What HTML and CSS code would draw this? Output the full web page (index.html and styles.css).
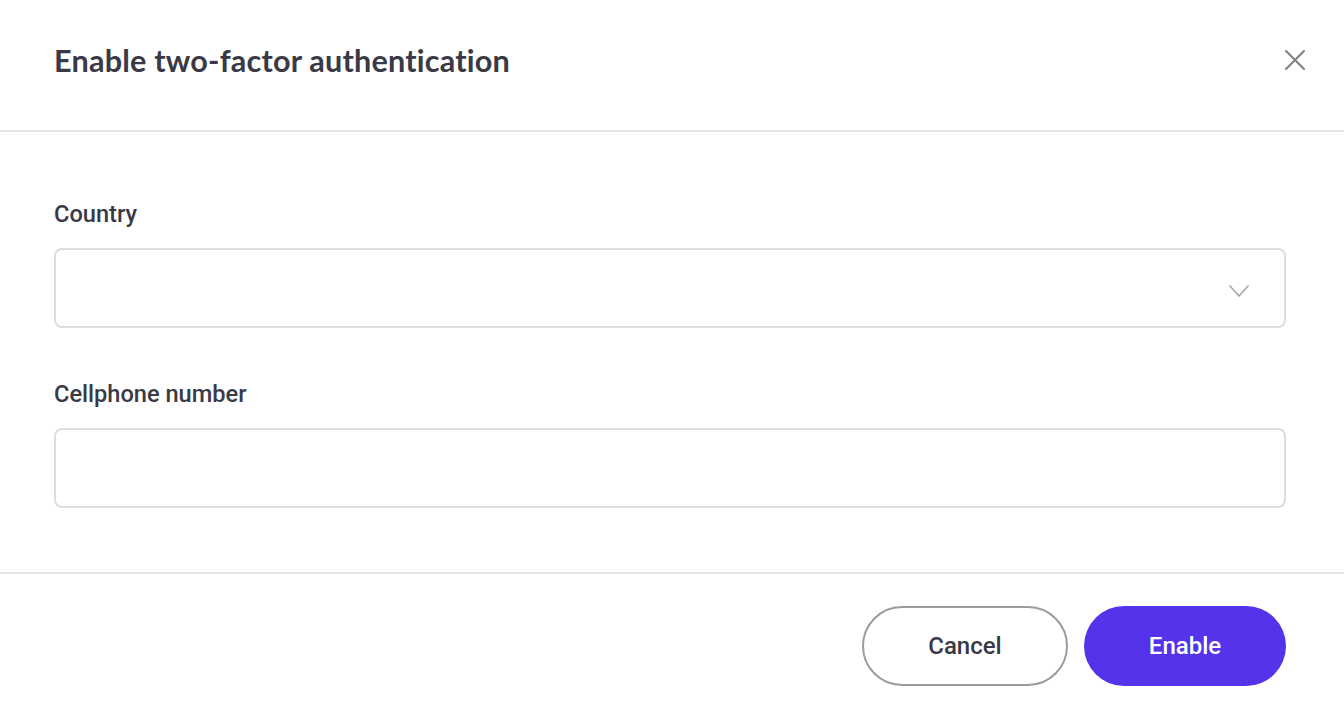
FILE: index.html
```html
<!DOCTYPE html>
<html>
<head>
<meta charset="utf-8">
<link rel="stylesheet" href="styles.css">
</head>
<body>
<div class="modal">
  <header class="modal-header">
    <h1 class="title">Enable two-factor authentication</h1>
    <button class="close" aria-label="Close">
      <svg width="22" height="22" viewBox="0 0 22 22"><path d="M2 2L20 20M20 2L2 20" stroke="#808080" stroke-width="2" stroke-linecap="round"/></svg>
    </button>
  </header>
  <main class="modal-body">
    <div class="field">
      <label class="label">Country</label>
      <div class="control select">
        <svg class="chevron" width="22" height="14" viewBox="0 0 22 14"><path d="M1.5 1.5L11 12L20.5 1.5" fill="none" stroke="#a8a8a8" stroke-width="1.6"/></svg>
      </div>
    </div>
    <div class="field">
      <label class="label">Cellphone number</label>
      <div class="control"></div>
    </div>
  </main>
  <footer class="modal-footer">
    <button class="btn btn-cancel">Cancel</button>
    <button class="btn btn-primary">Enable</button>
  </footer>
</div>
</body>
</html>
```
FILE: styles.css
```css
* { box-sizing: border-box; }
html, body { margin: 0; padding: 0; background: #fff; }
.modal { width: 1344px; height: 714px; display: flex; flex-direction: column; }
.modal-header {
  height: 132px;
  border-bottom: 2px solid #e6e6e6;
  display: flex;
  align-items: center;
  justify-content: space-between;
  padding: 0 38px 10px 54px;
}
.title {
  margin: 0;
  font-family: "Lato", sans-serif;
  font-weight: 700;
  font-size: 30.6px;
  color: #3a3946;
  letter-spacing: 0.2px;
}
.close { border: 0; background: none; padding: 0; width: 22px; height: 22px; cursor: pointer; display: flex; }
.modal-body {
  height: 442px;
  border-bottom: 2px solid #e6e6e6;
  padding: 68px 58px 0 54px;
  display: flex;
  flex-direction: column;
  gap: 52px;
}
.field { display: flex; flex-direction: column; gap: 20px; }
.label {
  font-family: "Roboto", sans-serif;
  font-weight: 500;
  font-size: 23.6px;
  line-height: 28px;
  color: #3a3946;
}
.control {
  height: 80px;
  border: 2px solid #dddddd;
  border-radius: 8px;
  position: relative;
}
.chevron { position: absolute; right: 34px; top: 34px; }
.modal-footer {
  flex: 1;
  display: flex;
  justify-content: flex-end;
  align-items: flex-start;
  padding: 32px 58px 0 0;
  gap: 16px;
}
.btn {
  height: 80px;
  border-radius: 40px;
  font-family: "Roboto", sans-serif;
  font-weight: 500;
  font-size: 24px;
  cursor: pointer;
}
.btn-cancel { width: 206px; background: #fff; border: 2px solid #9b9b9b; color: #3a3946; }
.btn-primary { width: 202px; background: #5433eb; border: 0; color: #fff; }
```
